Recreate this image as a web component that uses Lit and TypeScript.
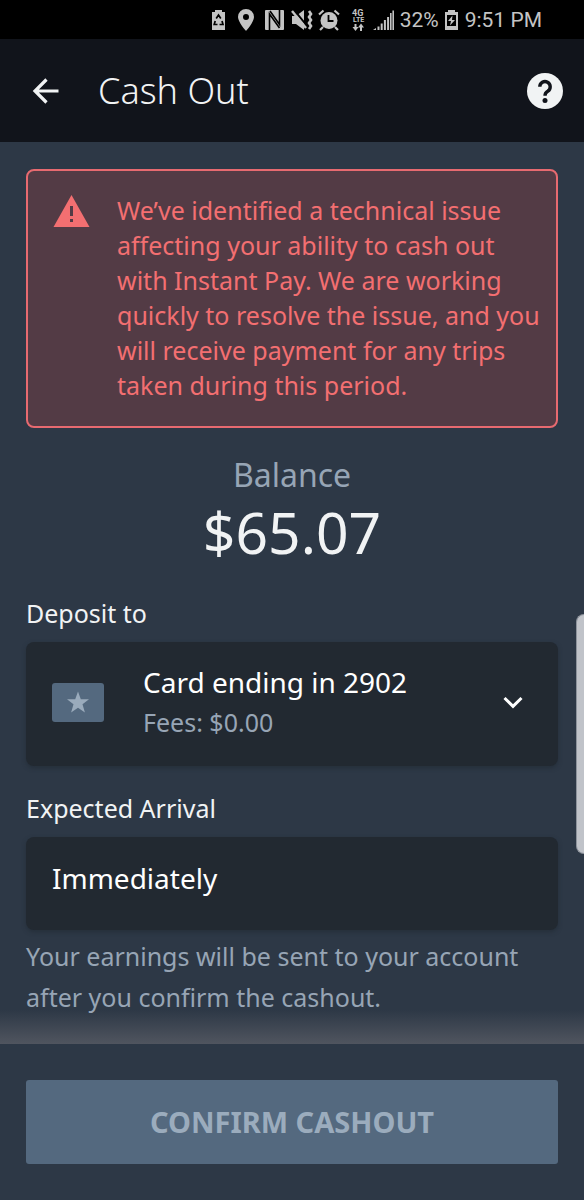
import { LitElement, html, css } from "lit";
import { customElement } from "lit/decorators.js";

@customElement("status-bar")
class StatusBar extends LitElement {
  static styles = css`
    :host {
      display: flex;
      align-items: center;
      justify-content: flex-end;
      height: 39px;
      padding-right: 42px;
      background: #000;
      color: #c4c4c4;
      font: 400 21px/24px Roboto, "Liberation Sans", sans-serif;
    }
    svg {
      display: block;
      fill: currentColor;
      flex: none;
    }
    .percent {
      margin: 0 6px;
    }
    .clock {
      margin-left: 7px;
    }
  `;

  render() {
    return html`
      <svg width="182" height="24" viewBox="0 0 182 24" role="img" aria-label="Status icons">
        <path d="M0 4h3V2h7v2h3v18H0z" />
        <path d="M4.200 10.500L6.500 7l2.300 3.500M10 13l1 3.500H7.500M5.500 16.500H2.200L3.200 13" fill="none" stroke="#000" stroke-width="1.700" />
        <path fill-rule="evenodd" d="M34 1a8 8 0 0 0-8 8c0 5 8 14 8 14s8-9 8-14a8 8 0 0 0-8-8z M34 6a3 3 0 1 1 0 6 3 3 0 0 1 0-6z" />
        <path d="M54 2h17q1 0 1 1v18q0 1-1 1H54q-1 0-1-1V3q0-1 1-1z" />
        <path d="M57.500 22V6l10 14M67.500 2v14.500L58 3" fill="none" stroke="#000" stroke-width="1.600" />
        <path d="M80 8h4l8-6v20l-8-6h-4z" />
        <path d="M82 2l13 16" fill="none" stroke="#000" stroke-width="2" />
        <path d="M80 3l14 17" fill="none" stroke="currentColor" stroke-width="2.400" />
        <path d="M97 3l2 3-2 3 2 3-2 3 2 3-2 3" fill="none" stroke="currentColor" stroke-width="2.600" />
        <circle cx="117" cy="12.500" r="8.500" />
        <path d="M107 6.500l4.500-4M127 6.500l-4.500-4M111 19l-3 3M123 19l3 3" fill="none" stroke="currentColor" stroke-width="2.200" />
        <path d="M116.500 7v6h5" fill="none" stroke="#000" stroke-width="1.800" />
        <path d="M143.500 16v4M149 23v-4" fill="none" stroke="currentColor" stroke-width="2" />
        <path d="M140.500 19h6l-3 4zM146 19.500h6l-3-4z" />
        <text x="140" y="8" font-size="9" font-weight="700">4G</text>
        <text x="141" y="14" font-size="7" font-weight="700">LTE</text>
        <path d="M161 22l3-2v2zM165.500 18.500h2V22h-2zM168.700 15.500h2V22h-2zM171.900 12h2v10h-2zM175.100 9h2v13h-2zM178 5h1.600v17H178zM180.400 2.500h1.600V22h-1.600z" />
      </svg>
      <span class="percent">32%</span>
      <svg width="13" height="20" viewBox="0 0 13 20" role="img" aria-label="Charging">
        <path fill-rule="evenodd" d="M0 2h3V0h7v2h3v18H0z M2 5v11h9V5z M7.500 5.500L3 11h3l-1 4.500L10 10H7z" />
      </svg>
      <span class="clock">9:51 PM</span>
    `;
  }
}

@customElement("cash-header")
class CashHeader extends LitElement {
  static styles = css`
    :host {
      display: flex;
      align-items: center;
      height: 103px;
      padding: 0 21px 0 27px;
      box-sizing: border-box;
      background: #11141b;
      color: #f1f3f4;
    }
    h1 {
      flex: 1;
      margin: 0 0 0 35px;
      font: 300 36px/44px "Noto Sans", "Open Sans", sans-serif;
    }
    button {
      display: block;
      padding: 0;
      border: 0;
      background: none;
      color: inherit;
    }
    svg {
      display: block;
    }
  `;

  render() {
    return html`
      <button type="button" aria-label="Back">
        <svg width="36" height="36" viewBox="0 0 36 36" fill="none" stroke="currentColor" stroke-width="3.200">
          <path d="M19.500 6.500L8 18l11.500 11.500M7.500 18H31.500" />
        </svg>
      </button>
      <h1>Cash Out</h1>
      <button type="button" aria-label="Help">
        <svg width="36" height="36" viewBox="0 0 36 36">
          <circle cx="18" cy="18" r="18" fill="currentColor" />
          <path d="M12.800 13.800a5.200 5.200 0 1 1 7.900 4.400q-2.700 1.500-2.700 4.600" fill="none" stroke="#11141b" stroke-width="3.400" />
          <circle cx="18" cy="27.600" r="2.500" fill="#11141b" />
        </svg>
      </button>
    `;
  }
}

@customElement("app-root")
class AppRoot extends LitElement {
  static styles = css`
    :host {
      position: relative;
      display: flex;
      flex-direction: column;
      min-height: 100vh;
      background: #2d3846;
      color: #f1f3f4;
      font: 400 25px/32px "Noto Sans", "Open Sans", sans-serif;
    }
    * {
      box-sizing: border-box;
    }
    svg {
      display: block;
      flex: none;
    }
    p {
      margin: 0;
    }
    main {
      flex: 1;
      display: flex;
      flex-direction: column;
      padding: 27px 26px 0;
      background: linear-gradient(to top, #50555f, #2d384600 34px);
    }
    .alert {
      display: flex;
      gap: 27px;
      padding: 22px 16px 23px 25px;
      border: 2px solid #e76a70;
      border-radius: 8px;
      background: #533b45;
      color: #f36f71;
      line-height: 35px;
    }
    .balance {
      margin-top: 27px;
      padding-bottom: 2px;
      text-align: center;
    }
    .caption {
      color: #97a5b5;
      font-size: 32px;
      line-height: 40px;
    }
    .amount {
      font-size: 57px;
      line-height: 74px;
    }
    .label {
      display: block;
      margin-top: 26px;
    }
    .card {
      margin-top: 13px;
      border-radius: 8px;
      background: #222931;
      box-shadow: 0 2px 4px #1e252e80;
      color: #fff;
    }
    .method {
      display: flex;
      align-items: center;
      height: 124px;
      padding: 0 32px 4px 26px;
    }
    .method-text {
      flex: 1;
      margin-left: 39px;
    }
    select,
    input {
      display: block;
      width: 100%;
      margin: 0;
      padding: 0;
      border: 0;
      appearance: none;
      background: none;
      color: inherit;
      font: inherit;
      font-size: 28px;
      line-height: 40px;
    }
    .fees {
      color: #97a5b5;
      line-height: 40px;
    }
    .arrival {
      padding: 21px 26px 32px;
    }
    .note {
      margin: 6px 0 26px;
      color: #97a5b5;
      line-height: 41px;
    }
    footer {
      padding: 36px 26px;
      background: #2d3846;
    }
    .confirm {
      display: block;
      width: 100%;
      height: 84px;
      padding: 0;
      border: 0;
      border-radius: 3px;
      background: #54697f;
      color: #9bacbd;
      font: 700 29px/40px "Noto Sans", "Open Sans", sans-serif;
    }
    .edge-handle {
      position: absolute;
      top: 614px;
      right: 0;
      width: 8px;
      height: 240px;
      border: 1px solid #8d939c;
      border-right: 0;
      border-radius: 8px 0 0 8px;
      background: #c0c3c9;
    }
  `;

  render() {
    return html`
      <status-bar></status-bar>
      <cash-header></cash-header>
      <main>
        <section class="alert" role="alert">
          <svg width="37" height="36" viewBox="0 0 37 36">
            <path d="M18.500 2L36.500 34H.500z" fill="#f36f71" />
            <path d="M17 13h3v10h-3zM17 26h3v3h-3z" fill="#533b45" />
          </svg>
          <p>
            We’ve identified a technical issue affecting your ability to cash out with Instant Pay.
            We are working quickly to resolve the issue, and you will receive payment for any trips
            taken during this period.
          </p>
        </section>

        <section class="balance">
          <p class="caption">Balance</p>
          <p class="amount">$65.07</p>
        </section>

        <label class="label" for="method">Deposit to</label>
        <div class="card method">
          <svg width="52" height="39" viewBox="0 0 52 39">
            <rect width="52" height="39" rx="3" fill="#54697f" />
            <path d="M26 8.500l2.800 7.700H37l-6.500 5 2.400 8.300L26 24.700l-6.900 4.800 2.400-8.300-6.500-5h8.200z" fill="#9aabbc" />
          </svg>
          <div class="method-text">
            <select id="method">
              <option>Card ending in 2902</option>
            </select>
            <p class="fees">Fees: $0.00</p>
          </div>
          <svg width="26" height="26" viewBox="0 0 26 26" fill="none" stroke="#fff" stroke-width="3">
            <path d="M4.500 9L13 17.300 21.500 9" />
          </svg>
        </div>

        <label class="label" for="arrival">Expected Arrival</label>
        <div class="card arrival">
          <input id="arrival" type="text" readonly value="Immediately" />
        </div>
        <p class="note">Your earnings will be sent to your account after you confirm the cashout.</p>
      </main>
      <footer>
        <button class="confirm" type="button">CONFIRM CASHOUT</button>
      </footer>
      <div class="edge-handle"></div>
    `;
  }
}
